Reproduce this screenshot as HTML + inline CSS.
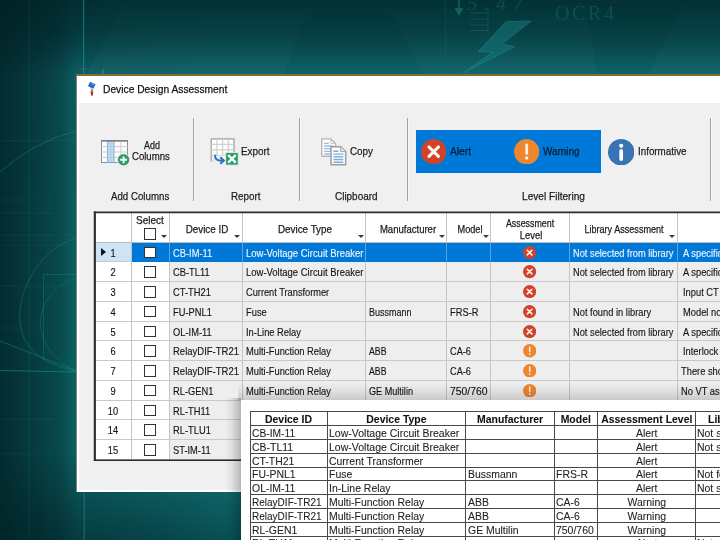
<!DOCTYPE html>
<html><head><meta charset="utf-8"><title>Device Design Assessment</title>
<style>
html,body{margin:0;padding:0;}
body{width:720px;height:540px;overflow:hidden;position:relative;background:#0a5a5e;font-family:"Liberation Sans",sans-serif;}
#bg{position:absolute;left:0;top:0;width:720px;height:540px;
 background:
  radial-gradient(ellipse 250px 120px at 50px 570px, rgba(0,28,32,0.55) 0, rgba(0,28,32,0.32) 50%, rgba(0,28,32,0) 100%),
  linear-gradient(to right, rgba(0,30,34,0.8) 0px, rgba(0,30,34,0.56) 40px, rgba(0,30,34,0.4) 60px, rgba(0,30,34,0.1) 76px, rgba(0,30,34,0.06) 110px, rgba(0,30,34,0) 220px),
  linear-gradient(to bottom, #033033 0px, #043c40 30px, #07464b 45px, #0b555a 60px, #0e6468 76px, #0e676a 300px, #0d6669 490px, #0c6165 515px, #0a595d 540px);}
#deco{position:absolute;left:0;top:0;width:720px;height:540px;}
.abs{position:absolute;}
.ic{position:absolute;display:block;}
#win{position:absolute;left:75.5px;top:74.2px;width:660px;height:417.6px;background:#fff;box-sizing:border-box;border-top:2px solid #806c30;border-left:1.6px solid #82827c;}
#panel{position:absolute;left:79.3px;top:102.5px;width:660px;height:387px;background:#f0f0f0;}
#title{position:absolute;left:77px;top:76.2px;width:660px;height:26.3px;background:#fff;}
.t{position:absolute;white-space:nowrap;color:#1c1c1c;-webkit-text-stroke:0.25px currentColor;line-height:14px;font-size:11.5px;}
.ui{font-size:11.5px;transform:scaleX(0.87);transform-origin:0 50%;}
.hd{font-size:10.8px;transform:scaleX(0.92);transform-origin:50% 50%;}
.sep{position:absolute;width:1px;background:#a3a3a3;top:118px;height:83px;box-shadow:1px 0 0 rgba(255,255,255,0.6);}
#grid{position:absolute;left:94px;top:212px;width:640px;height:249px;background:#fff;}
.cell{position:absolute;box-sizing:border-box;border-right:1px solid #c4c4c4;border-bottom:1px solid #c9c9c9;}
.g{background:#eeeeee;}
.w{background:#fff;}
.s{background:#0078d7;border-right-color:#5aa2e0;border-bottom-color:#0078d7;}
.hs{background:#cce4f7;}
.gt{position:absolute;white-space:nowrap;-webkit-text-stroke:0.15px currentColor;font-size:10.6px;line-height:13px;color:#161616;transform:scaleX(0.88);transform-origin:0 50%;}
.gt.c{transform-origin:50% 50%;}
.gt.sel{color:#eaf4ff;}
.cb{position:absolute;width:12.2px;height:11.4px;box-sizing:border-box;border:1.4px solid #333;background:#fff;}
.arr{position:absolute;width:0;height:0;border-left:3px solid transparent;border-right:3px solid transparent;border-top:3.6px solid #3c3c3c;}
#ov{position:absolute;left:241px;top:400px;width:500px;height:160px;background:#fff;}
.ot{position:absolute;white-space:nowrap;-webkit-text-stroke:0.08px currentColor;font-size:11px;line-height:14px;color:#222;transform:scaleX(0.95);transform-origin:0 50%;}
.ot.c{transform-origin:50% 50%;}
.ob{font-weight:bold;color:#111;}
.vl{position:absolute;width:1.3px;background:#484848;}
.hl{position:absolute;height:1.3px;background:#484848;}
</style></head><body>
<div id="bg"></div>
<div id="layer" style="position:absolute;left:0;top:0;width:720px;height:540px;will-change:transform;">

<svg id="deco" viewBox="0 0 720 540">
<defs><linearGradient id="wg" x1="0" y1="0" x2="0" y2="1"><stop offset="0" stop-color="#9fe8e8" stop-opacity="0.2"/><stop offset="1" stop-color="#9fe8e8" stop-opacity="1"/></linearGradient></defs>
<g fill="url(#wg)" stroke="none" opacity="0.04">
<polygon points="127,0 312,0 283,76 85,76"/>
<polygon points="383,0 585,0 598,76 425,76"/>
<polygon points="684,0 720,0 720,76 648,76"/>
</g>
<g fill="none" stroke="#22a0a0" stroke-width="0.8" opacity="0.6">
<g opacity="0.3">
<line x1="29.3" y1="0" x2="29.3" y2="540"/>
<line x1="48" y1="76" x2="48" y2="540" opacity="0.6"/>
<line x1="0" y1="140.7" x2="76" y2="140.7"/>
<line x1="0" y1="200" x2="76" y2="200"/>
<line x1="0" y1="213" x2="76" y2="213"/>
<line x1="0" y1="235" x2="76" y2="235"/>
<line x1="0" y1="245.5" x2="76" y2="245.5" opacity="0.6"/>
<line x1="0" y1="286" x2="76" y2="286"/>
<line x1="0" y1="328" x2="76" y2="328"/>
<line x1="0" y1="419" x2="76" y2="419"/>
<line x1="0" y1="454" x2="76" y2="454"/>
</g>
<line x1="83.7" y1="0" x2="83.7" y2="74" stroke="#22a8ac" stroke-width="1" opacity="1"/><line x1="80" y1="69" x2="87.500" y2="69" stroke="#1f9aa0" opacity="0.8"/><line x1="103" y1="69" x2="103" y2="74" stroke="#25a5a8" stroke-width="1.5" opacity="0.9"/>
<line x1="84.2" y1="491.5" x2="84.2" y2="540" stroke="#2cafb0" opacity="0.9"/>
<g clip-path="url(#lc)">
<path d="M0 172 A183 183 0 0 1 76 131" opacity="0.75"/>
<path d="M76 238.500 C40 247 8 300 24 338 C33 357 56 368 76 371" opacity="0.7"/>
<path d="M76 278 C52 284 32 312 44 340 C50 354 64 366 76 370" opacity="0.55"/>
<path d="M0 341 L76 371" opacity="0.8"/>
<path d="M0 370.500 L76 372" opacity="0.9" stroke="#2bb0b0"/>
<path d="M43.500 360 L43.500 274.500 L76 274.500" opacity="0.55"/>
</g>
</g>
<clipPath id="lc"><rect x="0" y="76" width="76" height="415"/></clipPath>
<g fill="none" stroke="#1a8084" stroke-width="1" opacity="0.55">
<path d="M505.8 21.7 L531.1 21.1 L501.7 43.9 L514.4 46.7 L463.6 72.8 L492.8 52.2 L478.3 51.7 Z" fill="#15777b" stroke="#2a9a9c" stroke-width="0.8"/>
<line x1="459" y1="0" x2="459" y2="9" stroke-width="1.5"/>
<path d="M454.5 8 L463.6 8 L459 16 Z" fill="#1a8084" stroke="none"/>
<g opacity="0.6"><line x1="470" y1="13" x2="488" y2="13"/><line x1="470" y1="19" x2="488" y2="19"/><line x1="470" y1="25" x2="488" y2="25"/><line x1="470" y1="30.5" x2="488" y2="30.5"/>
<line x1="488" y1="8" x2="488" y2="34"/></g>
<line x1="445.5" y1="0" x2="445.5" y2="74" opacity="0.3"/>
</g>
<text x="555" y="19.5" font-family="Liberation Serif,serif" font-size="20" fill="#17666b" opacity="0.5" letter-spacing="2.6">OCR4</text>
<text x="467" y="10" font-family="Liberation Serif,serif" font-style="italic" font-size="21" fill="#17666b" opacity="0.45" letter-spacing="6.500">5.47</text>
</svg>

<div id="win"></div><div id="title"></div><div id="panel"></div>
<svg class="ic" style="left:86px;top:80px;width:12px;height:18px" viewBox="0 0 12 18">
<path d="M4.3 1.8 L9.6 4.4 L7.2 8.8 L1.9 6 Z" fill="#2467c9"/><path d="M5 3.6 L7.8 5" stroke="#6fa8ee" stroke-width="1"/><rect x="4.700" y="8.600" width="2.400" height="3" fill="#9a9aa0"/><path d="M4.500 11.400 L7.300 11.400 L6.600 15.800 L5.200 15.800 Z" fill="#c2222a"/></svg>
<div class="t ui" style="left:103px;top:82px;font-size:11.6px;transform:scaleX(0.885);color:#111">Device Design Assessment</div>
<div class="sep" style="left:193px"></div>
<div class="sep" style="left:299px"></div>
<div class="sep" style="left:407px"></div>
<div class="sep" style="left:710px"></div>
<svg class="ic" style="left:101px;top:139.5px;width:30px;height:27px" viewBox="0 0 30 27">
<rect x="0.5" y="0.8" width="26" height="21.7" fill="#fbfbfb" stroke="#8f8f8f"/>
<path d="M0.5 6.500 H26.500 M0.5 12 H26.500 M0.5 17.500 H26.500 M19.800 1 V22.500" stroke="#cfcfcf" fill="none"/>
<rect x="6.700" y="1" width="6.200" height="21.500" fill="#c4dcf3" stroke="#7ea9d8"/>
<path d="M9.800 1.500 V22" stroke="#9fc3e8" stroke-width="0.8"/>
<path d="M0 0.800 H27" stroke="#7d7d7d" stroke-width="1.500"/>
<circle cx="22.600" cy="19.800" r="6.100" fill="#2e9b69" stroke="#f0f0f0" stroke-width="0.9"/>
<path d="M22.600 16.400 V23.200 M19.200 19.800 H26" stroke="#fff" stroke-width="1.900"/></svg>
<div class="t ui" style="left:144px;top:138px;transform:scaleX(0.777);">Add</div>
<div class="t ui" style="left:132.1px;top:148.5px;transform:scaleX(0.833);">Columns</div>
<div class="t ui" style="left:110.5px;top:188.5px;transform:scaleX(0.8438);">Add Columns</div>
<svg class="ic" style="left:210px;top:138px;width:30px;height:28px" viewBox="0 0 30 28">
<rect x="1.2" y="0.9" width="22.800" height="22" fill="#fdfdfd" stroke="#a2a2a2" stroke-width="1.300"/>
<path d="M6.900 1 V23 M12.600 1 V23 M18.300 1 V23 M1.200 6.400 H24 M1.200 11.900 H24 M1.200 17.400 H24" stroke="#d0d0d0" stroke-width="1.200" fill="none"/>
<rect x="2" y="17.500" width="13" height="8" fill="#f0f0f0" opacity="0.85"/>
<rect x="15.700" y="14.500" width="12.500" height="12.600" fill="#2f9c6b" stroke="#e6f2ea" stroke-width="0.8"/>
<path d="M18.200 17 L25.700 24.600 M25.700 17 L18.200 24.600" stroke="#fff" stroke-width="2.300"/>
<path d="M5.100 16.800 Q4.800 22.300 9.500 22.500 L13 22.500" stroke="#2a6fc9" stroke-width="2" fill="none"/><path d="M10.300 19.200 L13.800 22.500 L10.300 25.800" fill="none" stroke="#2a6fc9" stroke-width="2"/></svg>
<div class="t ui" style="left:241px;top:144px;transform:scaleX(0.8575);">Export</div>
<div class="t ui" style="left:231px;top:188.5px;transform:scaleX(0.8546);">Report</div>
<svg class="ic" style="left:320px;top:137.3px;width:27px;height:29px" viewBox="0 0 27 29">
<path d="M1.700 1.900 H10.800 L15.600 6.600 V19.200 H1.700 Z" fill="#fcfcfc" stroke="#b6b6b6" stroke-width="1.400" stroke-linejoin="round"/>
<path d="M10.800 2 V6.600 H15.500" fill="none" stroke="#c4c4c4" stroke-width="1"/>
<path d="M4.200 6.300 H8.800 M4.200 9 H12.800 M4.200 11.700 H12.800 M4.200 14.400 H12.800 M4.200 17 H10" stroke="#93bde3" stroke-width="1.300"/>
<path d="M11 9.700 H20.800 L25.700 14.500 V27.700 H11 Z" fill="#fcfcfc" stroke="#9d9d9d" stroke-width="1.500" stroke-linejoin="round"/>
<path d="M20.600 9.800 V14.600 H25.600" fill="#e4e4e4" stroke="#a8a8a8" stroke-width="1"/>
<path d="M13.500 14.300 H18.300 M13.500 17.100 H23.300 M13.500 19.800 H23.300 M13.500 22.500 H23.300 M13.500 25.200 H23.300" stroke="#7eaedb" stroke-width="1.400"/></svg>
<div class="t ui" style="left:349.5px;top:144px;transform:scaleX(0.8567);">Copy</div>
<div class="t ui" style="left:334.5px;top:188.5px;transform:scaleX(0.8634);">Clipboard</div>
<div class="abs" style="left:415.5px;top:129.5px;width:185.5px;height:43px;background:#0078d7"></div>
<svg class="ic" style="left:421.0px;top:139.0px;width:25.4px;height:25.4px" viewBox="0 0 20 20"><circle cx="10" cy="10" r="10" fill="#d0432b"/><path d="M6.300 6.300 L13.700 13.700 M13.700 6.300 L6.300 13.700" stroke="#fdf3ee" stroke-width="2.5" stroke-linecap="round"/></svg>
<div class="t ui" style="left:450px;top:144px;transform:scaleX(0.8881);color:#0a1a2a">Alert</div>
<svg class="ic" style="left:513.5999999999999px;top:138.60000000000002px;width:25.4px;height:25.4px" viewBox="0 0 20 20"><circle cx="10" cy="10" r="10" fill="#ee8630"/><path d="M10 4.600 L10 11.400" stroke="#fdf1e4" stroke-width="2.2" stroke-linecap="round"/><circle cx="10" cy="15" r="1.350" fill="#fdf1e4"/></svg>
<div class="t ui" style="left:543px;top:144px;transform:scaleX(0.8609);color:#0a1a2a">Warning</div>
<svg class="ic" style="left:607.5px;top:138.5px;width:26.400px;height:26.400px" viewBox="0 0 20 20">
<circle cx="10" cy="10" r="10" fill="#3874b4"/><circle cx="10" cy="5.200" r="1.600" fill="#fff"/><path d="M10 9 V15.200" stroke="#fff" stroke-width="2.800" stroke-linecap="round"/></svg>
<div class="t ui" style="left:637.5px;top:144px;transform:scaleX(0.8526);">Informative</div>
<div class="t ui" style="left:522px;top:188.5px;transform:scaleX(0.88);">Level Filtering</div>
<div id="grid"></div>
<div class="cell w" style="left:95.5px;top:213.2px;width:36.0px;height:29.900000000000013px;border-bottom-color:#bdbdbd"></div>
<div class="cell w" style="left:131.5px;top:213.2px;width:38.0px;height:29.900000000000013px;border-bottom-color:#bdbdbd"></div>
<div class="cell w" style="left:169.5px;top:213.2px;width:73.0px;height:29.900000000000013px;border-bottom-color:#bdbdbd"></div>
<div class="cell w" style="left:242.5px;top:213.2px;width:123.5px;height:29.900000000000013px;border-bottom-color:#bdbdbd"></div>
<div class="cell w" style="left:366px;top:213.2px;width:81px;height:29.900000000000013px;border-bottom-color:#bdbdbd"></div>
<div class="cell w" style="left:447px;top:213.2px;width:44px;height:29.900000000000013px;border-bottom-color:#bdbdbd"></div>
<div class="cell w" style="left:491px;top:213.2px;width:79px;height:29.900000000000013px;border-bottom-color:#bdbdbd"></div>
<div class="cell w" style="left:570px;top:213.2px;width:107.5px;height:29.900000000000013px;border-bottom-color:#bdbdbd"></div>
<div class="cell w" style="left:677.5px;top:213.2px;width:82.5px;height:29.900000000000013px;border-bottom-color:#bdbdbd"></div>
<div class="t hd" style="left:90.1px;width:120px;text-align:center;top:213.3px;transform:scaleX(0.9262)">Select</div>
<div class="cb" style="left:143.9px;top:228.4px"></div>
<div class="arr" style="left:160.8px;top:234.6px"></div>
<div class="t hd" style="left:146.85px;width:120px;text-align:center;top:221.9px;transform:scaleX(0.9122)">Device ID</div>
<div class="arr" style="left:234.2px;top:234.6px"></div>
<div class="t hd" style="left:245.0px;width:120px;text-align:center;top:221.9px;transform:scaleX(0.9117)">Device Type</div>
<div class="arr" style="left:358.2px;top:234.6px"></div>
<div class="t hd" style="left:348.125px;width:120px;text-align:center;top:221.9px;transform:scaleX(0.884)">Manufacturer</div>
<div class="arr" style="left:439px;top:234.6px"></div>
<div class="t hd" style="left:409.5px;width:120px;text-align:center;top:221.9px;transform:scaleX(0.8499)">Model</div>
<div class="arr" style="left:482.8px;top:234.6px"></div>
<div class="t hd" style="left:470.375px;width:120px;text-align:center;top:215.8px;transform:scaleX(0.8203)">Assessment</div>
<div class="t hd" style="left:470.75px;width:120px;text-align:center;top:227.8px;transform:scaleX(0.8715)">Level</div>
<div class="t hd" style="left:564.125px;width:120px;text-align:center;top:221.9px;transform:scaleX(0.841)">Library Assessment</div>
<div class="arr" style="left:669px;top:234.6px"></div>
<div class="cell hs" style="left:95.5px;top:242.5px;width:36.0px;height:19.75px"></div>
<div class="cell s" style="left:131.5px;top:242.5px;width:38.0px;height:19.75px"></div>
<div class="cell s" style="left:169.5px;top:242.5px;width:73.0px;height:19.75px"></div>
<div class="cell s" style="left:242.5px;top:242.5px;width:123.5px;height:19.75px"></div>
<div class="cell s" style="left:366px;top:242.5px;width:81px;height:19.75px"></div>
<div class="cell s" style="left:447px;top:242.5px;width:44px;height:19.75px"></div>
<div class="cell s" style="left:491px;top:242.5px;width:79px;height:19.75px"></div>
<div class="cell s" style="left:570px;top:242.5px;width:107.5px;height:19.75px"></div>
<div class="cell s" style="left:677.5px;top:242.5px;width:82.5px;height:19.75px"></div>
<div class="gt c" style="left:93px;width:40px;text-align:center;top:246.7px">1</div>
<div class="abs" style="left:101px;top:248.3px;width:0;height:0;border-top:4px solid transparent;border-bottom:4px solid transparent;border-left:5.500px solid #111"></div>
<div class="cb" style="left:143.9px;top:246.7px"></div>
<div class="gt sel" style="left:172.5px;top:246.7px">CB-IM-11</div>
<div class="gt sel" style="left:245.5px;top:246.7px;transform:scaleX(0.8943)">Low-Voltage Circuit Breaker</div>
<div class="gt sel" style="left:572.5px;top:246.7px;transform:scaleX(0.8749)">Not selected from library</div>
<div class="gt sel" style="left:682.5px;top:246.7px">A specific</div>
<svg class="ic" style="left:523.1999999999999px;top:245.70000000000002px;width:13.2px;height:13.2px" viewBox="0 0 20 20"><circle cx="10" cy="10" r="10" fill="#d0432b"/><path d="M6.500 6.500 L13.500 13.500 M13.500 6.500 L6.500 13.500" stroke="#fdf3ee" stroke-width="2.3" stroke-linecap="round"/></svg>
<div class="cell w" style="left:95.5px;top:262.25px;width:36.0px;height:19.75px"></div>
<div class="cell w" style="left:131.5px;top:262.25px;width:38.0px;height:19.75px"></div>
<div class="cell g" style="left:169.5px;top:262.25px;width:73.0px;height:19.75px"></div>
<div class="cell g" style="left:242.5px;top:262.25px;width:123.5px;height:19.75px"></div>
<div class="cell g" style="left:366px;top:262.25px;width:81px;height:19.75px"></div>
<div class="cell g" style="left:447px;top:262.25px;width:44px;height:19.75px"></div>
<div class="cell g" style="left:491px;top:262.25px;width:79px;height:19.75px"></div>
<div class="cell g" style="left:570px;top:262.25px;width:107.5px;height:19.75px"></div>
<div class="cell g" style="left:677.5px;top:262.25px;width:82.5px;height:19.75px"></div>
<div class="gt c" style="left:93px;width:40px;text-align:center;top:266.45px">2</div>
<div class="cb" style="left:143.9px;top:266.45px"></div>
<div class="gt" style="left:172.5px;top:266.45px">CB-TL11</div>
<div class="gt" style="left:245.5px;top:266.45px;transform:scaleX(0.8943)">Low-Voltage Circuit Breaker</div>
<div class="gt" style="left:572.5px;top:266.45px;transform:scaleX(0.8749)">Not selected from library</div>
<div class="gt" style="left:682.5px;top:266.45px">A specific</div>
<svg class="ic" style="left:523.1999999999999px;top:265.45px;width:13.2px;height:13.2px" viewBox="0 0 20 20"><circle cx="10" cy="10" r="10" fill="#d0432b"/><path d="M6.500 6.500 L13.500 13.500 M13.500 6.500 L6.500 13.500" stroke="#fdf3ee" stroke-width="2.3" stroke-linecap="round"/></svg>
<div class="cell w" style="left:95.5px;top:282.0px;width:36.0px;height:19.75px"></div>
<div class="cell w" style="left:131.5px;top:282.0px;width:38.0px;height:19.75px"></div>
<div class="cell g" style="left:169.5px;top:282.0px;width:73.0px;height:19.75px"></div>
<div class="cell g" style="left:242.5px;top:282.0px;width:123.5px;height:19.75px"></div>
<div class="cell g" style="left:366px;top:282.0px;width:81px;height:19.75px"></div>
<div class="cell g" style="left:447px;top:282.0px;width:44px;height:19.75px"></div>
<div class="cell g" style="left:491px;top:282.0px;width:79px;height:19.75px"></div>
<div class="cell g" style="left:570px;top:282.0px;width:107.5px;height:19.75px"></div>
<div class="cell g" style="left:677.5px;top:282.0px;width:82.5px;height:19.75px"></div>
<div class="gt c" style="left:93px;width:40px;text-align:center;top:286.2px">3</div>
<div class="cb" style="left:143.9px;top:286.2px"></div>
<div class="gt" style="left:172.5px;top:286.2px">CT-TH21</div>
<div class="gt" style="left:245.5px;top:286.2px;transform:scaleX(0.8724)">Current Transformer</div>
<div class="gt" style="left:682.5px;top:286.2px">Input CT</div>
<svg class="ic" style="left:523.1999999999999px;top:285.2px;width:13.2px;height:13.2px" viewBox="0 0 20 20"><circle cx="10" cy="10" r="10" fill="#d0432b"/><path d="M6.500 6.500 L13.500 13.500 M13.500 6.500 L6.500 13.500" stroke="#fdf3ee" stroke-width="2.3" stroke-linecap="round"/></svg>
<div class="cell w" style="left:95.5px;top:301.75px;width:36.0px;height:19.75px"></div>
<div class="cell w" style="left:131.5px;top:301.75px;width:38.0px;height:19.75px"></div>
<div class="cell g" style="left:169.5px;top:301.75px;width:73.0px;height:19.75px"></div>
<div class="cell g" style="left:242.5px;top:301.75px;width:123.5px;height:19.75px"></div>
<div class="cell g" style="left:366px;top:301.75px;width:81px;height:19.75px"></div>
<div class="cell g" style="left:447px;top:301.75px;width:44px;height:19.75px"></div>
<div class="cell g" style="left:491px;top:301.75px;width:79px;height:19.75px"></div>
<div class="cell g" style="left:570px;top:301.75px;width:107.5px;height:19.75px"></div>
<div class="cell g" style="left:677.5px;top:301.75px;width:82.5px;height:19.75px"></div>
<div class="gt c" style="left:93px;width:40px;text-align:center;top:305.95px">4</div>
<div class="cb" style="left:143.9px;top:305.95px"></div>
<div class="gt" style="left:172.5px;top:305.95px">FU-PNL1</div>
<div class="gt" style="left:245.5px;top:305.95px">Fuse</div>
<div class="gt" style="left:369px;top:305.95px;transform:scaleX(0.8486)">Bussmann</div>
<div class="gt" style="left:450px;top:305.95px;transform:scaleX(0.88)">FRS-R</div>
<div class="gt" style="left:572.5px;top:305.95px;transform:scaleX(0.8795)">Not found in library</div>
<div class="gt" style="left:682.5px;top:305.95px">Model not</div>
<svg class="ic" style="left:523.1999999999999px;top:304.95px;width:13.2px;height:13.2px" viewBox="0 0 20 20"><circle cx="10" cy="10" r="10" fill="#d0432b"/><path d="M6.500 6.500 L13.500 13.500 M13.500 6.500 L6.500 13.500" stroke="#fdf3ee" stroke-width="2.3" stroke-linecap="round"/></svg>
<div class="cell w" style="left:95.5px;top:321.5px;width:36.0px;height:19.75px"></div>
<div class="cell w" style="left:131.5px;top:321.5px;width:38.0px;height:19.75px"></div>
<div class="cell g" style="left:169.5px;top:321.5px;width:73.0px;height:19.75px"></div>
<div class="cell g" style="left:242.5px;top:321.5px;width:123.5px;height:19.75px"></div>
<div class="cell g" style="left:366px;top:321.5px;width:81px;height:19.75px"></div>
<div class="cell g" style="left:447px;top:321.5px;width:44px;height:19.75px"></div>
<div class="cell g" style="left:491px;top:321.5px;width:79px;height:19.75px"></div>
<div class="cell g" style="left:570px;top:321.5px;width:107.5px;height:19.75px"></div>
<div class="cell g" style="left:677.5px;top:321.5px;width:82.5px;height:19.75px"></div>
<div class="gt c" style="left:93px;width:40px;text-align:center;top:325.7px">5</div>
<div class="cb" style="left:143.9px;top:325.7px"></div>
<div class="gt" style="left:172.5px;top:325.7px">OL-IM-11</div>
<div class="gt" style="left:245.5px;top:325.7px">In-Line Relay</div>
<div class="gt" style="left:572.5px;top:325.7px;transform:scaleX(0.8749)">Not selected from library</div>
<div class="gt" style="left:682.5px;top:325.7px">A specific</div>
<svg class="ic" style="left:523.1999999999999px;top:324.7px;width:13.2px;height:13.2px" viewBox="0 0 20 20"><circle cx="10" cy="10" r="10" fill="#d0432b"/><path d="M6.500 6.500 L13.500 13.500 M13.500 6.500 L6.500 13.500" stroke="#fdf3ee" stroke-width="2.3" stroke-linecap="round"/></svg>
<div class="cell w" style="left:95.5px;top:341.25px;width:36.0px;height:19.75px"></div>
<div class="cell w" style="left:131.5px;top:341.25px;width:38.0px;height:19.75px"></div>
<div class="cell g" style="left:169.5px;top:341.25px;width:73.0px;height:19.75px"></div>
<div class="cell g" style="left:242.5px;top:341.25px;width:123.5px;height:19.75px"></div>
<div class="cell g" style="left:366px;top:341.25px;width:81px;height:19.75px"></div>
<div class="cell g" style="left:447px;top:341.25px;width:44px;height:19.75px"></div>
<div class="cell g" style="left:491px;top:341.25px;width:79px;height:19.75px"></div>
<div class="cell g" style="left:570px;top:341.25px;width:107.5px;height:19.75px"></div>
<div class="cell g" style="left:677.5px;top:341.25px;width:82.5px;height:19.75px"></div>
<div class="gt c" style="left:93px;width:40px;text-align:center;top:345.45px">6</div>
<div class="cb" style="left:143.9px;top:345.45px"></div>
<div class="gt" style="left:172.5px;top:345.45px;transform:scaleX(0.8964)">RelayDIF-TR21</div>
<div class="gt" style="left:245.5px;top:345.45px;transform:scaleX(0.8798)">Multi-Function Relay</div>
<div class="gt" style="left:369px;top:345.45px;transform:scaleX(0.8251)">ABB</div>
<div class="gt" style="left:450px;top:345.45px;transform:scaleX(0.8695)">CA-6</div>
<div class="gt" style="left:682.5px;top:345.45px">Interlock</div>
<svg class="ic" style="left:523.0999999999999px;top:344.35px;width:13.4px;height:13.4px" viewBox="0 0 20 20"><circle cx="10" cy="10" r="10" fill="#ee8630"/><path d="M10 4.600 L10 11.400" stroke="#fdf1e4" stroke-width="2.2" stroke-linecap="round"/><circle cx="10" cy="15" r="1.350" fill="#fdf1e4"/></svg>
<div class="cell w" style="left:95.5px;top:361.0px;width:36.0px;height:19.75px"></div>
<div class="cell w" style="left:131.5px;top:361.0px;width:38.0px;height:19.75px"></div>
<div class="cell g" style="left:169.5px;top:361.0px;width:73.0px;height:19.75px"></div>
<div class="cell g" style="left:242.5px;top:361.0px;width:123.5px;height:19.75px"></div>
<div class="cell g" style="left:366px;top:361.0px;width:81px;height:19.75px"></div>
<div class="cell g" style="left:447px;top:361.0px;width:44px;height:19.75px"></div>
<div class="cell g" style="left:491px;top:361.0px;width:79px;height:19.75px"></div>
<div class="cell g" style="left:570px;top:361.0px;width:107.5px;height:19.75px"></div>
<div class="cell g" style="left:677.5px;top:361.0px;width:82.5px;height:19.75px"></div>
<div class="gt c" style="left:93px;width:40px;text-align:center;top:365.2px">7</div>
<div class="cb" style="left:143.9px;top:365.2px"></div>
<div class="gt" style="left:172.5px;top:365.2px;transform:scaleX(0.8964)">RelayDIF-TR21</div>
<div class="gt" style="left:245.5px;top:365.2px;transform:scaleX(0.8798)">Multi-Function Relay</div>
<div class="gt" style="left:369px;top:365.2px;transform:scaleX(0.8251)">ABB</div>
<div class="gt" style="left:450px;top:365.2px;transform:scaleX(0.8695)">CA-6</div>
<div class="gt" style="left:680.5px;top:365.2px">There should</div>
<svg class="ic" style="left:523.0999999999999px;top:364.1px;width:13.4px;height:13.4px" viewBox="0 0 20 20"><circle cx="10" cy="10" r="10" fill="#ee8630"/><path d="M10 4.600 L10 11.400" stroke="#fdf1e4" stroke-width="2.2" stroke-linecap="round"/><circle cx="10" cy="15" r="1.350" fill="#fdf1e4"/></svg>
<div class="cell w" style="left:95.5px;top:380.75px;width:36.0px;height:19.75px"></div>
<div class="cell w" style="left:131.5px;top:380.75px;width:38.0px;height:19.75px"></div>
<div class="cell g" style="left:169.5px;top:380.75px;width:73.0px;height:19.75px"></div>
<div class="cell g" style="left:242.5px;top:380.75px;width:123.5px;height:19.75px"></div>
<div class="cell g" style="left:366px;top:380.75px;width:81px;height:19.75px"></div>
<div class="cell g" style="left:447px;top:380.75px;width:44px;height:19.75px"></div>
<div class="cell g" style="left:491px;top:380.75px;width:79px;height:19.75px"></div>
<div class="cell g" style="left:570px;top:380.75px;width:107.5px;height:19.75px"></div>
<div class="cell g" style="left:677.5px;top:380.75px;width:82.5px;height:19.75px"></div>
<div class="gt c" style="left:93px;width:40px;text-align:center;top:384.95px">9</div>
<div class="cb" style="left:143.9px;top:384.95px"></div>
<div class="gt" style="left:172.5px;top:384.95px">RL-GEN1</div>
<div class="gt" style="left:245.5px;top:384.95px;transform:scaleX(0.8798)">Multi-Function Relay</div>
<div class="gt" style="left:369px;top:384.95px;transform:scaleX(0.8586)">GE Multilin</div>
<div class="gt" style="left:450px;top:384.95px;transform:scaleX(0.9787)">750/760</div>
<div class="gt" style="left:680.5px;top:384.95px">No VT assigned</div>
<svg class="ic" style="left:523.0999999999999px;top:383.85px;width:13.4px;height:13.4px" viewBox="0 0 20 20"><circle cx="10" cy="10" r="10" fill="#ee8630"/><path d="M10 4.600 L10 11.400" stroke="#fdf1e4" stroke-width="2.2" stroke-linecap="round"/><circle cx="10" cy="15" r="1.350" fill="#fdf1e4"/></svg>
<div class="cell w" style="left:95.5px;top:400.5px;width:36.0px;height:19.75px"></div>
<div class="cell w" style="left:131.5px;top:400.5px;width:38.0px;height:19.75px"></div>
<div class="cell g" style="left:169.5px;top:400.5px;width:73.0px;height:19.75px"></div>
<div class="cell g" style="left:242.5px;top:400.5px;width:123.5px;height:19.75px"></div>
<div class="cell g" style="left:366px;top:400.5px;width:81px;height:19.75px"></div>
<div class="cell g" style="left:447px;top:400.5px;width:44px;height:19.75px"></div>
<div class="cell g" style="left:491px;top:400.5px;width:79px;height:19.75px"></div>
<div class="cell g" style="left:570px;top:400.5px;width:107.5px;height:19.75px"></div>
<div class="cell g" style="left:677.5px;top:400.5px;width:82.5px;height:19.75px"></div>
<div class="gt c" style="left:93px;width:40px;text-align:center;top:404.7px">10</div>
<div class="cb" style="left:143.9px;top:404.7px"></div>
<div class="gt" style="left:172.5px;top:404.7px">RL-TH11</div>
<div class="gt" style="left:245.5px;top:404.7px;transform:scaleX(0.8798)">Multi-Function Relay</div>
<svg class="ic" style="left:523.1999999999999px;top:403.7px;width:13.2px;height:13.2px" viewBox="0 0 20 20"><circle cx="10" cy="10" r="10" fill="#d0432b"/><path d="M6.500 6.500 L13.500 13.500 M13.500 6.500 L6.500 13.500" stroke="#fdf3ee" stroke-width="2.3" stroke-linecap="round"/></svg>
<div class="cell w" style="left:95.5px;top:420.25px;width:36.0px;height:19.75px"></div>
<div class="cell w" style="left:131.5px;top:420.25px;width:38.0px;height:19.75px"></div>
<div class="cell g" style="left:169.5px;top:420.25px;width:73.0px;height:19.75px"></div>
<div class="cell g" style="left:242.5px;top:420.25px;width:123.5px;height:19.75px"></div>
<div class="cell g" style="left:366px;top:420.25px;width:81px;height:19.75px"></div>
<div class="cell g" style="left:447px;top:420.25px;width:44px;height:19.75px"></div>
<div class="cell g" style="left:491px;top:420.25px;width:79px;height:19.75px"></div>
<div class="cell g" style="left:570px;top:420.25px;width:107.5px;height:19.75px"></div>
<div class="cell g" style="left:677.5px;top:420.25px;width:82.5px;height:19.75px"></div>
<div class="gt c" style="left:93px;width:40px;text-align:center;top:424.45px">14</div>
<div class="cb" style="left:143.9px;top:424.45px"></div>
<div class="gt" style="left:172.5px;top:424.45px">RL-TLU1</div>
<div class="gt" style="left:245.5px;top:424.45px;transform:scaleX(0.8798)">Multi-Function Relay</div>
<svg class="ic" style="left:523.1999999999999px;top:423.45px;width:13.2px;height:13.2px" viewBox="0 0 20 20"><circle cx="10" cy="10" r="10" fill="#d0432b"/><path d="M6.500 6.500 L13.500 13.500 M13.500 6.500 L6.500 13.500" stroke="#fdf3ee" stroke-width="2.3" stroke-linecap="round"/></svg>
<div class="cell w" style="left:95.5px;top:440.0px;width:36.0px;height:19.75px"></div>
<div class="cell w" style="left:131.5px;top:440.0px;width:38.0px;height:19.75px"></div>
<div class="cell g" style="left:169.5px;top:440.0px;width:73.0px;height:19.75px"></div>
<div class="cell g" style="left:242.5px;top:440.0px;width:123.5px;height:19.75px"></div>
<div class="cell g" style="left:366px;top:440.0px;width:81px;height:19.75px"></div>
<div class="cell g" style="left:447px;top:440.0px;width:44px;height:19.75px"></div>
<div class="cell g" style="left:491px;top:440.0px;width:79px;height:19.75px"></div>
<div class="cell g" style="left:570px;top:440.0px;width:107.5px;height:19.75px"></div>
<div class="cell g" style="left:677.5px;top:440.0px;width:82.5px;height:19.75px"></div>
<div class="gt c" style="left:93px;width:40px;text-align:center;top:444.2px">15</div>
<div class="cb" style="left:143.9px;top:444.2px"></div>
<div class="gt" style="left:172.5px;top:444.2px">ST-IM-11</div>
<div class="gt" style="left:245.5px;top:444.2px;transform:scaleX(0.8943)">Low-Voltage Circuit Breaker</div>
<svg class="ic" style="left:523.1999999999999px;top:443.2px;width:13.2px;height:13.2px" viewBox="0 0 20 20"><circle cx="10" cy="10" r="10" fill="#d0432b"/><path d="M6.500 6.500 L13.500 13.500 M13.500 6.500 L6.500 13.500" stroke="#fdf3ee" stroke-width="2.3" stroke-linecap="round"/></svg>
<svg class="ic" style="left:0;top:0;width:720px;height:540px" viewBox="0 0 720 540"><path d="M94.850 461 V211.500" stroke="#2c2c2c" stroke-width="2.100" fill="none"/><path d="M93.800 212.350 H720" stroke="#2c2c2c" stroke-width="1.700" fill="none"/><path d="M93.800 460.300 H720" stroke="#2c2c2c" stroke-width="1.500" fill="none"/></svg>
<div class="abs" style="left:238px;top:383px;width:500px;height:17px;background:linear-gradient(to bottom, rgba(0,0,0,0) 0, rgba(0,0,0,0.05) 40%, rgba(0,0,0,0.15) 100%)"></div>
<div class="abs" style="left:225px;top:398px;width:16px;height:150px;background:linear-gradient(to right, rgba(0,0,0,0) 0, rgba(0,0,0,0.06) 40%, rgba(0,0,0,0.24) 100%)"></div>
<div id="ov"></div>
<div class="vl" style="left:250px;top:412px;height:140px"></div>
<div class="vl" style="left:327px;top:412px;height:140px"></div>
<div class="vl" style="left:465px;top:412px;height:140px"></div>
<div class="vl" style="left:554px;top:412px;height:140px"></div>
<div class="vl" style="left:597px;top:412px;height:140px"></div>
<div class="vl" style="left:695px;top:412px;height:140px"></div>
<div class="hl" style="left:250px;top:411px;width:480px"></div>
<div class="hl" style="left:250px;top:425px;width:480px"></div>
<div class="hl" style="left:250px;top:439px;width:480px"></div>
<div class="hl" style="left:250px;top:453px;width:480px"></div>
<div class="hl" style="left:250px;top:467px;width:480px"></div>
<div class="hl" style="left:250px;top:480px;width:480px"></div>
<div class="hl" style="left:250px;top:494px;width:480px"></div>
<div class="hl" style="left:250px;top:508px;width:480px"></div>
<div class="hl" style="left:250px;top:522px;width:480px"></div>
<div class="hl" style="left:250px;top:536px;width:480px"></div>
<div class="hl" style="left:250px;top:549px;width:480px"></div>
<div class="ot ob c" style="left:250px;width:77px;text-align:center;top:412.1px">Device ID</div>
<div class="ot ob c" style="left:327px;width:138.8px;text-align:center;top:412.1px">Device Type</div>
<div class="ot ob c" style="left:465.8px;width:88.19999999999999px;text-align:center;top:412.1px">Manufacturer</div>
<div class="ot ob c" style="left:554px;width:43.5px;text-align:center;top:412.1px">Model</div>
<div class="ot ob c" style="left:597.5px;width:97.5px;text-align:center;top:412.1px">Assessment Level</div>
<div class="ot ob" style="left:707.5px;top:412.1px">Library Assessment</div>
<div class="ot" style="left:252.3px;top:425.90000000000003px;transform:scaleX(0.932)">CB-IM-11</div>
<div class="ot" style="left:329.3px;top:425.90000000000003px;transform:scaleX(0.9553)">Low-Voltage Circuit Breaker</div>
<div class="ot c" style="left:597.5px;width:97.5px;text-align:center;top:425.90000000000003px">Alert</div>
<div class="ot" style="left:697.3px;top:425.90000000000003px">Not selected from library</div>
<div class="ot" style="left:252.3px;top:439.70000000000005px">CB-TL11</div>
<div class="ot" style="left:329.3px;top:439.70000000000005px;transform:scaleX(0.9553)">Low-Voltage Circuit Breaker</div>
<div class="ot c" style="left:597.5px;width:97.5px;text-align:center;top:439.70000000000005px">Alert</div>
<div class="ot" style="left:697.3px;top:439.70000000000005px">Not selected from library</div>
<div class="ot" style="left:252.3px;top:453.5px">CT-TH21</div>
<div class="ot" style="left:329.3px;top:453.5px">Current Transformer</div>
<div class="ot c" style="left:597.5px;width:97.5px;text-align:center;top:453.5px">Alert</div>
<div class="ot" style="left:252.3px;top:467.3px">FU-PNL1</div>
<div class="ot" style="left:329.3px;top:467.3px">Fuse</div>
<div class="ot" style="left:468.1px;top:467.3px">Bussmann</div>
<div class="ot" style="left:556.3px;top:467.3px">FRS-R</div>
<div class="ot c" style="left:597.5px;width:97.5px;text-align:center;top:467.3px">Alert</div>
<div class="ot" style="left:697.3px;top:467.3px">Not found in library</div>
<div class="ot" style="left:252.3px;top:481.1px">OL-IM-11</div>
<div class="ot" style="left:329.3px;top:481.1px">In-Line Relay</div>
<div class="ot c" style="left:597.5px;width:97.5px;text-align:center;top:481.1px">Alert</div>
<div class="ot" style="left:697.3px;top:481.1px">Not selected from library</div>
<div class="ot" style="left:252.3px;top:494.90000000000003px;transform:scaleX(0.9109)">RelayDIF-TR21</div>
<div class="ot" style="left:329.3px;top:494.90000000000003px">Multi-Function Relay</div>
<div class="ot" style="left:468.1px;top:494.90000000000003px">ABB</div>
<div class="ot" style="left:556.3px;top:494.90000000000003px">CA-6</div>
<div class="ot c" style="left:597.5px;width:97.5px;text-align:center;top:494.90000000000003px">Warning</div>
<div class="ot" style="left:252.3px;top:508.70000000000005px;transform:scaleX(0.9109)">RelayDIF-TR21</div>
<div class="ot" style="left:329.3px;top:508.70000000000005px">Multi-Function Relay</div>
<div class="ot" style="left:468.1px;top:508.70000000000005px">ABB</div>
<div class="ot" style="left:556.3px;top:508.70000000000005px">CA-6</div>
<div class="ot c" style="left:597.5px;width:97.5px;text-align:center;top:508.70000000000005px">Warning</div>
<div class="ot" style="left:252.3px;top:522.5px">RL-GEN1</div>
<div class="ot" style="left:329.3px;top:522.5px">Multi-Function Relay</div>
<div class="ot" style="left:468.1px;top:522.5px">GE Multilin</div>
<div class="ot" style="left:556.3px;top:522.5px">750/760</div>
<div class="ot c" style="left:597.5px;width:97.5px;text-align:center;top:522.5px">Warning</div>
<div class="ot" style="left:252.3px;top:536.3000000000001px">RL-TH11</div>
<div class="ot" style="left:329.3px;top:536.3000000000001px">Multi-Function Relay</div>
<div class="ot c" style="left:597.5px;width:97.5px;text-align:center;top:536.3000000000001px">Alert</div>
<div class="ot" style="left:697.3px;top:536.3000000000001px">Not selected from library</div>
</div></body></html>
